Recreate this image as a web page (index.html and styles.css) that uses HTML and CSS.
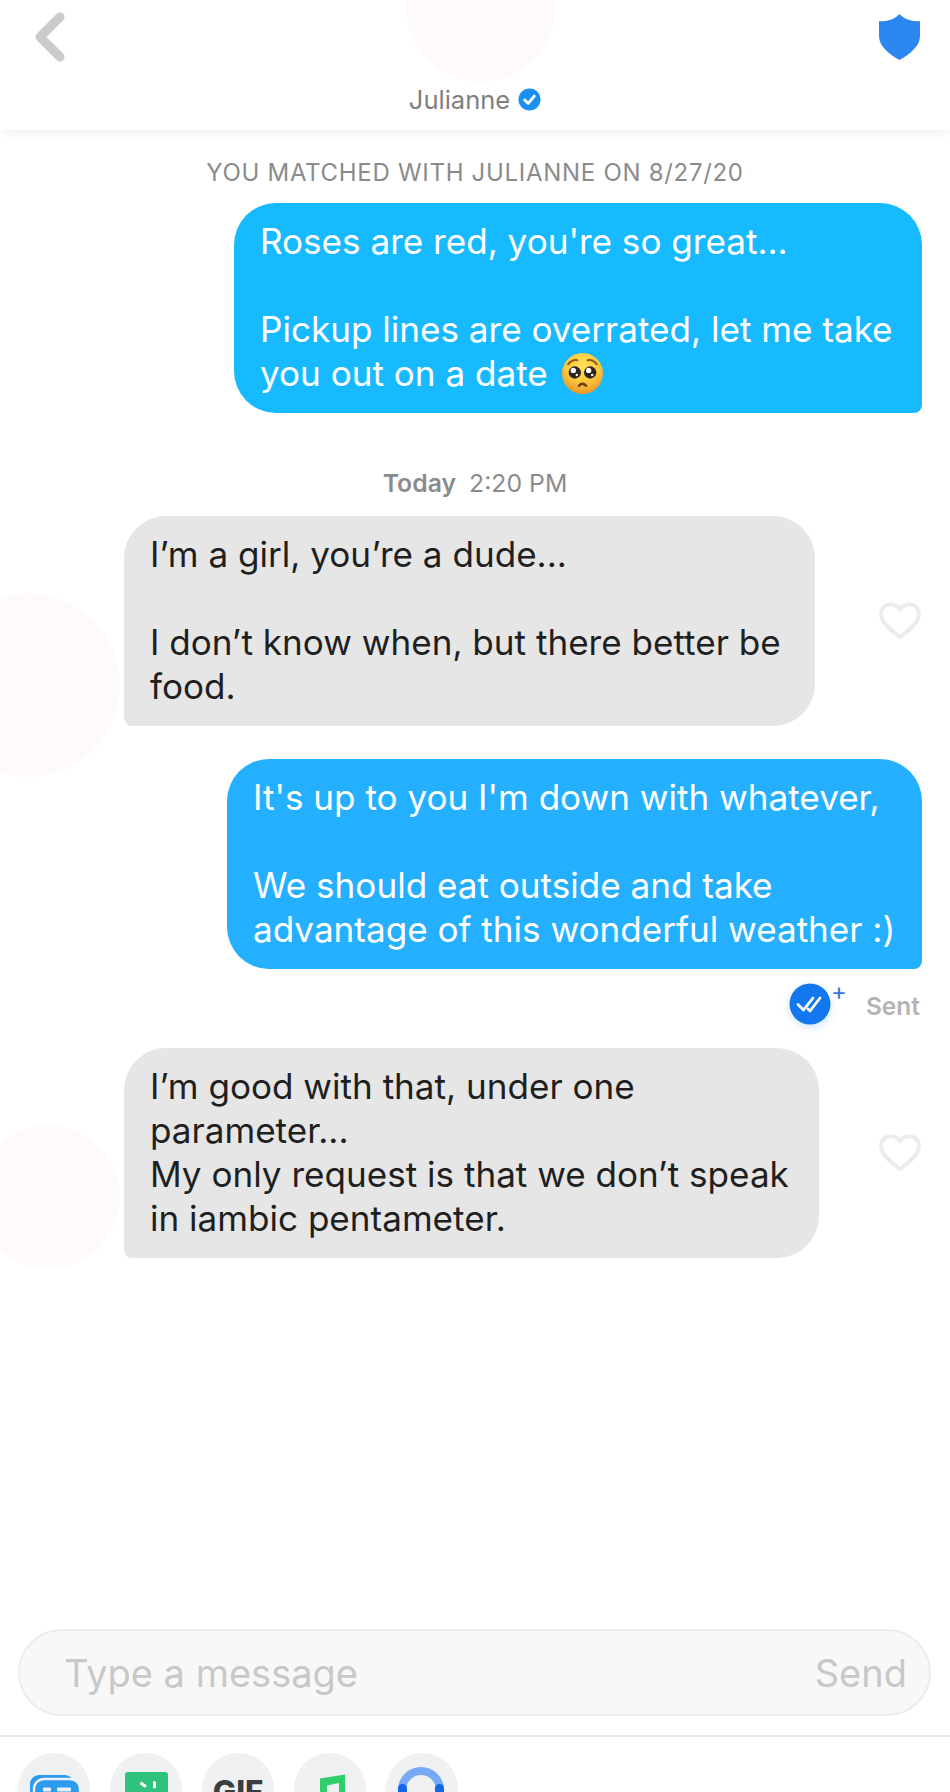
FILE: index.html
```html
<!DOCTYPE html>
<html lang="en">
<head>
<meta charset="utf-8">
<title>Julianne</title>
<link rel="stylesheet" href="styles.css">
</head>
<body>
<div class="screen">
  <header class="topbar">
    <span class="avatar avatar-top"></span>
    <svg class="back" viewBox="0 0 34 52"><path d="M28 6 L8 26 L28 46" fill="none" stroke="#cbcbcb" stroke-width="9" stroke-linecap="round" stroke-linejoin="round"/></svg>
    <div class="who">
      <span class="who-name">Julianne</span>
      <svg class="badge" viewBox="0 0 24 24"><circle cx="12" cy="12" r="11.5" fill="#1c8ff0"/><path d="M7 12.5 L10.7 16 L17 8.5" fill="none" stroke="#fff" stroke-width="3" stroke-linecap="round" stroke-linejoin="round"/></svg>
    </div>
    <svg class="shield" viewBox="0 0 41 46"><path d="M20.5 0 C25 5 33 8 41 7 V22 C41 32 31 40 20.5 46 C10 40 0 32 0 22 V7 C8 8 16 5 20.5 0 Z" fill="#2d87f0"/></svg>
  </header>

  <main class="thread">
    <p class="notice">YOU MATCHED WITH JULIANNE ON 8/27/20</p>
    <div class="bubble out out-a">Roses are red, you're so great...<br><br>Pickup lines are overrated, let me take<br>you out on a date <svg class="emoji" viewBox="0 0 40 40"><defs><radialGradient id="face" cx="50%" cy="30%" r="72%"><stop offset="0" stop-color="#ffe05a"/><stop offset=".55" stop-color="#fcc93d"/><stop offset="1" stop-color="#ee9226"/></radialGradient></defs><circle cx="20" cy="20" r="20" fill="url(#face)"/><circle cx="12.5" cy="19" r="6" fill="#2d2320"/><circle cx="27.5" cy="19" r="6" fill="#2d2320"/><circle cx="11" cy="17" r="2.6" fill="#fff"/><circle cx="26" cy="17" r="2.6" fill="#fff"/><circle cx="14.5" cy="21.5" r="1.2" fill="#fff"/><circle cx="29.5" cy="21.5" r="1.2" fill="#fff"/><path d="M6 11 Q10 6 15 7 M25 7 Q30 6 34 11" fill="none" stroke="#8a5a1c" stroke-width="2" stroke-linecap="round"/><path d="M16.5 32 Q20 28 23.5 32" fill="none" stroke="#6b3c14" stroke-width="2.4" stroke-linecap="round"/></svg></div>

    <p class="stamp"><b>Today</b> 2:20 PM</p>

    <div class="in-row">
      <span class="avatar avatar-a"></span>
      <div class="bubble in in-a">I’m a girl, you’re a dude...<br><br>I don’t know when, but there better be<br>food.</div>
      <svg class="heart" viewBox="0 0 42 38"><path d="M21 34.5 C12 27 3 21 3 12 C3 6.5 7.5 3 12 3 C16 3 19 5 21 8 C23 5 26 3 30 3 C34.5 3 39 6.5 39 12 C39 21 30 27 21 34.5 Z" fill="none" stroke="#ececec" stroke-width="3.8" stroke-linejoin="round"/></svg>
    </div>

    <div class="bubble out out-b">It's up to you I'm down with whatever,<br><br>We should eat outside and take<br>advantage of this wonderful weather :)</div>

    <div class="status">
      <span class="read">
        <svg class="read-icon" viewBox="0 0 42 42"><circle cx="21" cy="21" r="20.5" fill="#1378ee"/><path d="M9 21.5 L14.5 27 L24 15 M19 26 L21 28 L31 15" fill="none" stroke="#fff" stroke-width="2.8" stroke-linecap="round" stroke-linejoin="round"/></svg>
        <span class="read-plus">+</span>
      </span>
      <span class="sent">Sent</span>
    </div>

    <div class="in-row">
      <span class="avatar avatar-b"></span>
      <div class="bubble in in-b">I’m good with that, under one<br>parameter...<br>My only request is that we don’t speak<br>in iambic pentameter.</div>
      <svg class="heart" viewBox="0 0 42 38"><path d="M21 34.5 C12 27 3 21 3 12 C3 6.5 7.5 3 12 3 C16 3 19 5 21 8 C23 5 26 3 30 3 C34.5 3 39 6.5 39 12 C39 21 30 27 21 34.5 Z" fill="none" stroke="#ececec" stroke-width="3.8" stroke-linejoin="round"/></svg>
    </div>
  </main>

  <footer class="composer">
    <div class="field">
      <span class="placeholder">Type a message</span>
      <span class="send">Send</span>
    </div>
  </footer>

  <nav class="tray">
    <span class="tool"><svg viewBox="0 0 72 72"><rect x="12" y="22" width="44" height="34" rx="9" fill="#2b9bf0"/><rect x="16" y="26" width="46" height="40" rx="10" fill="#2b9bf0" stroke="#eceef1" stroke-width="2.5"/><rect x="25" y="34.5" width="8" height="4" rx="1" fill="#eceef1"/><rect x="39" y="34.5" width="14" height="4" rx="1" fill="#eceef1"/></svg></span>
    <span class="tool"><svg viewBox="0 0 72 72"><rect x="15" y="19" width="43" height="53" rx="3" fill="#2fc27f"/><path d="M31.5 30.5 L35 33 M44.5 29.5 L44.5 34" stroke="#fff" stroke-width="3" stroke-linecap="round"/></svg></span>
    <span class="tool tool-gif">GIF</span>
    <span class="tool"><svg viewBox="0 0 72 72"><path d="M26 25.5 L51 21.5 V72 H45 V30 L33 32.5 V72 H26 Z" fill="#2fcf6b"/></svg></span>
    <span class="tool"><svg viewBox="0 0 72 72"><path d="M16 37 A19 19 0 0 1 54 37" fill="none" stroke="#78a9f5" stroke-width="8"/><rect x="12" y="31" width="9" height="30" rx="4.5" fill="#1566e6"/><rect x="49" y="31" width="9" height="30" rx="4.5" fill="#1566e6"/></svg></span>
  </nav>
</div>
</body>
</html>
```
FILE: styles.css
```css
* { box-sizing: border-box; }
html, body { margin: 0; padding: 0; height: 100%; overflow: hidden; background: #fff; }
.screen { height: 1792px; display: flex; flex-direction: column; position: relative; overflow: hidden; font-family: "Inter", "Liberation Sans", sans-serif; }

.topbar { height: 130px; flex: none; position: relative; display: flex; align-items: flex-start; justify-content: center; background: #fff; box-shadow: 0 2px 10px rgba(0,0,0,.07); z-index: 2; overflow: hidden; clip-path: inset(0 0 -30px 0); }
.avatar { position: absolute; border-radius: 50%; background: #fffafa; }
.avatar-top { width: 150px; height: 150px; left: 406px; top: -68px; }
.back { position: absolute; left: 32px; top: 11px; width: 34px; height: 52px; }
.shield { position: absolute; left: 879px; top: 14px; width: 41px; height: 46px; }
.who { margin-top: 83px; display: flex; align-items: center; gap: 8px; height: 32px; position: relative; }
.who-name { font-size: 25.5px; color: #7f7f7f; }
.badge { width: 23px; height: 23px; }

.thread { flex: 1; display: flex; flex-direction: column; min-height: 0; padding-top: 28px; }
.notice { margin: 0 0 15px; height: 30px; line-height: 30px; text-align: center; font-size: 24px; color: #8b8b8b; letter-spacing: .7px; }
.stamp { margin: 55px 0 18px; height: 30px; line-height: 30px; text-align: center; font-size: 24.8px; color: #8b8b8b; }
.stamp b { font-weight: 600; margin-right: 6px; }

.bubble { font-size: 35.1px; line-height: 44px; padding: 16px 26px 18px; height: 210px; white-space: nowrap; border-radius: 42px; }
.out { color: #fff; align-self: flex-end; margin-right: 28px; border-bottom-right-radius: 8px; }
.out-a { background: #18baff; width: 688px; }
.out-b { background: #25b0ff; width: 695px; margin-top: 33px; }
.in { background: #e6e6e6; color: #1f1f1f; border-bottom-left-radius: 8px; position: relative; }
.in-a { width: 691px; }
.in-b { width: 695px; }
.emoji { width: 41px; height: 41px; vertical-align: -8px; margin-left: 4px; }

.in-row { display: flex; align-items: center; padding-left: 124px; padding-right: 28px; justify-content: space-between; position: relative; }
.avatar-a { width: 184px; height: 184px; left: -64px; top: 77px; }
.avatar-b { width: 144px; height: 144px; left: -24px; top: 77px; }
.heart { width: 44px; height: 40px; flex: none; }

.status { height: 41px; margin: 14px 0 24px; padding-right: 30px; display: flex; align-items: center; justify-content: flex-end; gap: 35px; }
.read { position: relative; width: 42px; height: 41px; }
.read-icon { width: 42px; height: 42px; display: block; filter: drop-shadow(0 3px 4px rgba(19,120,238,.2)); }
.read-plus { position: absolute; left: 42px; top: -3px; font-size: 24px; line-height: 24px; color: #3f6fe0; }
.sent { font-size: 24.5px; font-weight: 600; color: #b4b4b4; margin-top: 5px; }

.composer { flex: none; padding: 0 19px 19px 18px; }
.field { height: 87px; border: 2px solid #ececec; background: #f8f8f8; border-radius: 44px; display: flex; align-items: center; justify-content: space-between; padding: 0 22px 0 44px; font-size: 38px; color: #c8c8c8; }

.tray { flex: none; height: 57px; border-top: 2px solid #e6e6e6; padding: 16px 0 0 18px; display: flex; gap: 20px; overflow: hidden; }
.tool { flex: none; width: 72px; height: 72px; border-radius: 50%; background: #eef0f2; display: block; overflow: hidden; }
.tool svg { width: 72px; height: 72px; display: block; }
.tool-gif { font-weight: 800; color: #3a3d42; font-size: 31px; text-align: center; line-height: 72px; padding-top: 3px; }
```
